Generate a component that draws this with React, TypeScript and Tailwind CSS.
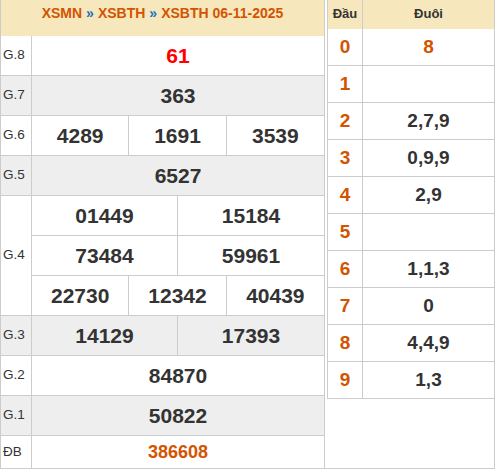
import React from "react";

const font = { fontFamily: '"Liberation Sans", Arial, sans-serif' };

function Cell({ children, className = "" }: { children?: React.ReactNode; className?: string }) {
  return (
    <div className={"flex items-center justify-center font-bold text-[21px] text-[#333] " + className}>
      {children}
    </div>
  );
}

function Row({
  label,
  values,
  gray,
  valueClass = "",
  h = "h-[40px]",
}: {
  label: string;
  values: string[];
  gray?: boolean;
  valueClass?: string;
  h?: string;
}) {
  const cols = values.length === 1 ? "grid-cols-1" : values.length === 2 ? "grid-cols-2" : "grid-cols-3";
  return (
    <div className={"flex border-b border-[#ccc] " + h + (gray ? " bg-[#eeeeee]" : " bg-white")}>
      <div className="w-[31px] shrink-0 border-r border-[#ccc] flex items-center pl-[2px] text-[13.5px] text-[#333]">
        {label}
      </div>
      <div className={"flex-1 grid divide-x divide-[#ccc] " + cols}>
        {values.map((v, i) => (
          <Cell key={i} className={valueClass}>
            {v}
          </Cell>
        ))}
      </div>
    </div>
  );
}

export default function App() {
  const loto: [string, string][] = [
    ["0", "8"],
    ["1", ""],
    ["2", "2,7,9"],
    ["3", "0,9,9"],
    ["4", "2,9"],
    ["5", ""],
    ["6", "1,1,3"],
    ["7", "0"],
    ["8", "4,4,9"],
    ["9", "1,3"],
  ];
  return (
    <div className="flex w-[495px] h-[469px] bg-white" style={font}>
      <div className="w-[325px] shrink-0 border-x border-[#ccc] flex flex-col">
        <div className="h-[36px] bg-[#f6e7bd] flex justify-center pt-[5px] text-[14px] font-bold leading-4">
          <span className="text-[#d35400]">XSMN</span>
          <span className="text-[#1e73be] mx-[4px]">»</span>
          <span className="text-[#d35400]">XSBTH</span>
          <span className="text-[#1e73be] mx-[4px]">»</span>
          <span className="text-[#d35400]">XSBTH 06-11-2025</span>
        </div>
        <Row label="G.8" values={["61"]} valueClass="text-[#ff0000]" />
        <Row label="G.7" values={["363"]} gray />
        <Row label="G.6" values={["4289", "1691", "3539"]} />
        <Row label="G.5" values={["6527"]} gray />
        <div className="flex border-b border-[#ccc] bg-white">
          <div className="w-[31px] shrink-0 border-r border-[#ccc] flex items-center pl-[2px] text-[13.5px] text-[#333]">
            G.4
          </div>
          <div className="flex-1 flex flex-col">
            <div className="h-[40px] border-b border-[#ccc] grid grid-cols-2 divide-x divide-[#ccc]">
              <Cell>01449</Cell>
              <Cell>15184</Cell>
            </div>
            <div className="h-[40px] border-b border-[#ccc] grid grid-cols-2 divide-x divide-[#ccc]">
              <Cell>73484</Cell>
              <Cell>59961</Cell>
            </div>
            <div className="h-[39px] grid grid-cols-3 divide-x divide-[#ccc]">
              <Cell>22730</Cell>
              <Cell>12342</Cell>
              <Cell>40439</Cell>
            </div>
          </div>
        </div>
        <Row label="G.3" values={["14129", "17393"]} gray />
        <Row label="G.2" values={["84870"]} />
        <Row label="G.1" values={["50822"]} gray />
        <Row label="ĐB" values={["386608"]} valueClass="text-[#d35400] !text-[18px]" h="h-[33px]" />
      </div>
      <div className="flex-1 pl-[2px] border-r border-b border-[#ccc]">
        <div className="border-l border-[#ccc]">
          <div className="grid grid-cols-[35px_1fr] h-[29px] bg-[#f6e7bd] text-[13px] font-bold text-[#333]">
            <div className="border-r border-[#ccc] flex justify-center pt-[4px]">Đầu</div>
            <div className="flex justify-center pt-[4px]">Đuôi</div>
          </div>
          {loto.map(([d, v]) => (
            <div key={d} className="grid grid-cols-[35px_1fr] h-[37px] border-b border-[#ccc] font-bold text-[19px]">
              <div className="border-r border-[#ccc] flex items-center justify-center text-[#d35400]">{d}</div>
              <div className={"flex items-center justify-center " + (d === "0" ? "text-[#d35400]" : "text-[#333]")}>
                {v}
              </div>
            </div>
          ))}
        </div>
      </div>
    </div>
  );
}
